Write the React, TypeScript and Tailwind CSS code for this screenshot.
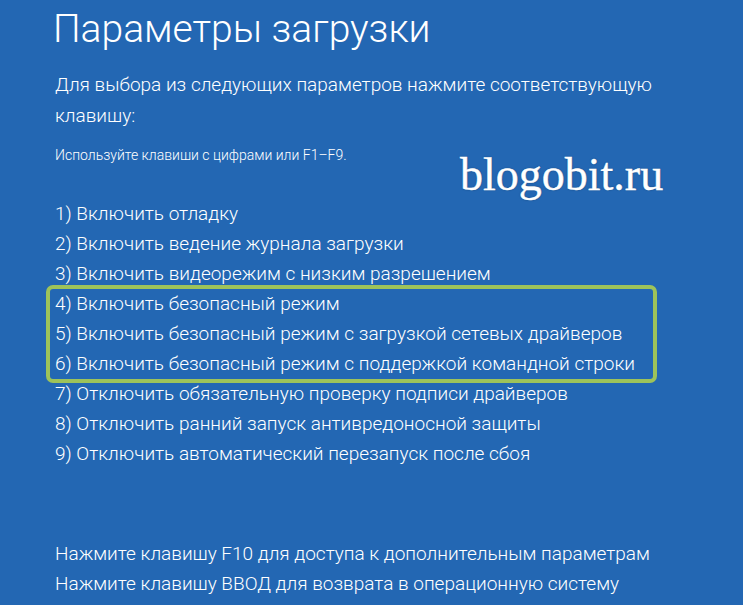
const items = [
  "1) Включить отладку",
  "2) Включить ведение журнала загрузки",
  "3) Включить видеорежим с низким разрешением",
];

const safeItems = [
  "4) Включить безопасный режим",
  "5) Включить безопасный режим с загрузкой сетевых драйверов",
  "6) Включить безопасный режим с поддержкой командной строки",
];

const moreItems = [
  "7) Отключить обязательную проверку подписи драйверов",
  "8) Отключить ранний запуск антивредоносной защиты",
  "9) Отключить автоматический перезапуск после сбоя",
];

function Row({ text }: { text: string }) {
  return <div className="h-[30px] leading-[30px] whitespace-nowrap">{text}</div>;
}

export default function App() {
  return (
    <div
      className="relative w-[743px] h-[605px] overflow-hidden bg-[#2367b3] text-white pl-[55px] font-light"
      style={{ fontFamily: "Roboto, 'Noto Sans', sans-serif" }}
    >
      <h1 className="text-[39px] leading-[56px] font-light -ml-[2px] pt-[1px]">Параметры загрузки</h1>

      <p className="mt-[12px] text-[19px] leading-[31px] w-[620px]">
        Для выбора из следующих параметров нажмите соответствующую клавишу:
      </p>

      <p className="mt-[14px] text-[14px] leading-[20px]">Используйте клавиши с цифрами или F1–F9.</p>

      <div className="mt-[34px] text-[19px]">
        {items.map((t) => (
          <Row key={t} text={t} />
        ))}
        <div className="-ml-[9px] w-[611px] pl-[5px] border-4 border-[#9dc35a] rounded-[7px] -my-[4px]">
          {safeItems.map((t) => (
            <Row key={t} text={t} />
          ))}
        </div>
        {moreItems.map((t) => (
          <Row key={t} text={t} />
        ))}
      </div>

      <div className="mt-[70px] text-[19px]">
        <Row text="Нажмите клавишу F10 для доступа к дополнительным параметрам" />
        <Row text="Нажмите клавишу ВВОД для возврата в операционную систему" />
      </div>

      <div
        className="absolute left-[460px] top-[149px] text-[46px] leading-[52px] font-normal text-white"
        style={{ fontFamily: "'Liberation Serif', serif", textShadow: "0 0 2px rgba(0,0,0,0.35)", WebkitTextStroke: "0.4px white" }}
      >
        blogobit.ru
      </div>
    </div>
  );
}
